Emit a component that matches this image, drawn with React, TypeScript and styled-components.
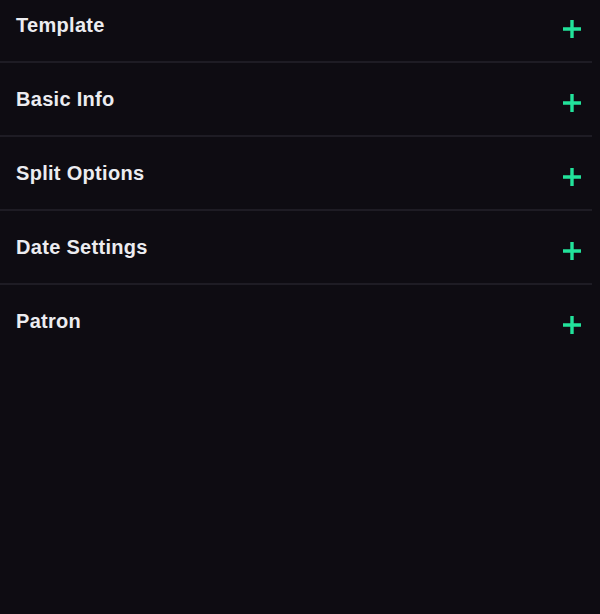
import React from "react";
import styled, { createGlobalStyle } from "styled-components";

const Global = createGlobalStyle`
  html, body { margin: 0; padding: 0; background: #0e0c12; }
  body { font-family: "Liberation Sans", Arial, sans-serif; }
`;

const Page = styled.div`
  width: 600px;
  height: 614px;
  background: #0e0c12;
  overflow: hidden;
`;

const List = styled.div`
  width: 592px;
  display: flex;
  flex-direction: column;
  margin-top: -11px;
`;

const Item = styled.div`
  border-bottom: 2px solid #1e1c24;
  &:last-child { border-bottom: none; }
`;

const Header = styled.div`
  height: 72px;
  display: flex;
  align-items: flex-start;
  justify-content: space-between;
  padding: 25px 10px 0 16px;
  box-sizing: border-box;
`;

const Title = styled.span`
  color: #ececf0;
  font-size: 20px;
  line-height: 22px;
  font-weight: 700;
  letter-spacing: 0.3px;
`;

const Plus = styled.svg`
  width: 20px;
  height: 20px;
  margin-top: 5px;
`;

const items = ["Template", "Basic Info", "Split Options", "Date Settings", "Patron"];

export default function App() {
  return (
    <Page>
      <Global />
      <List>
        {items.map((t) => (
          <Item key={t}>
            <Header>
              <Title>{t}</Title>
              <Plus viewBox="0 0 20 20">
                <path d="M10 1v18M1 10h18" stroke="#22e39b" strokeWidth="3.4" />
              </Plus>
            </Header>
          </Item>
        ))}
      </List>
    </Page>
  );
}
